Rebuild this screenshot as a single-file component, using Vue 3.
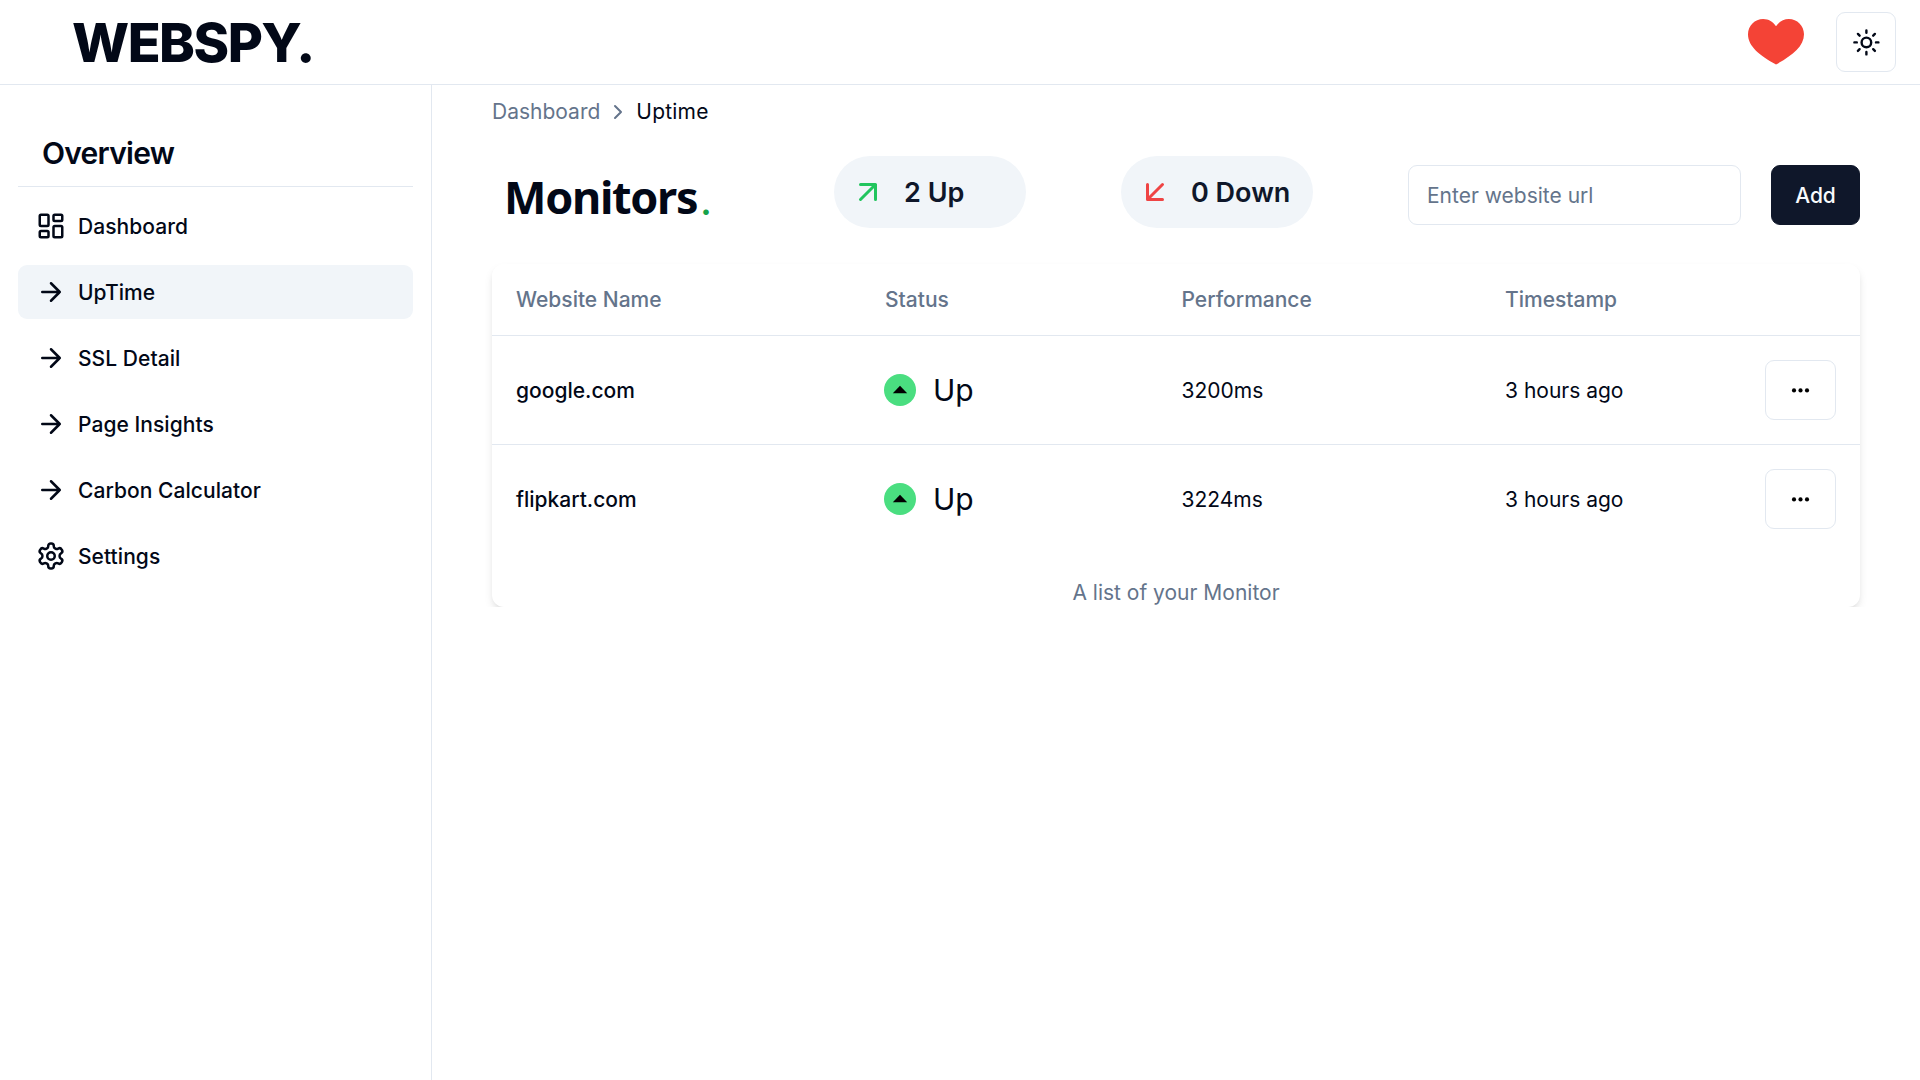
<script setup>
const nav = [
  { label: 'Dashboard', icon: 'dashboard' },
  { label: 'UpTime', icon: 'arrow', active: true },
  { label: 'SSL Detail', icon: 'arrow' },
  { label: 'Page Insights', icon: 'arrow' },
  { label: 'Carbon Calculator', icon: 'arrow' },
  { label: 'Settings', icon: 'settings' },
]
const monitors = [
  { site: 'google.com', status: 'Up', performance: '3200ms', time: '3 hours ago' },
  { site: 'flipkart.com', status: 'Up', performance: '3224ms', time: '3 hours ago' },
]
</script>

<template>
  <div class="app">
    <header class="topbar">
      <div class="logo">WEBSPY.</div>
      <div class="actions">
        <svg class="heart" viewBox="0 0 56 46"><path fill="#f44336" d="M28 7.200C25.200 2.800 20.500 0 15.200 0 6.800 0 0 6.800 0 15.200 0 27.500 12 36.500 28 45.500 44 36.500 56 27.500 56 15.200 56 6.800 49.200 0 40.800 0 35.500 0 30.800 2.800 28 7.200Z" /></svg>
        <button class="theme">
          <svg class="line" width="28.8" height="28.8" viewBox="0 0 24 24"><circle cx="12" cy="12" r="4" /><path d="M12 2v2M12 20v2M4.930 4.930l1.410 1.410M17.660 17.660l1.410 1.410M2 12h2M20 12h2M6.340 17.660l-1.410 1.410M19.070 4.930l-1.410 1.410" /></svg>
        </button>
      </div>
    </header>

    <div class="body">
      <aside class="sidebar">
        <h2>Overview</h2>
        <nav>
          <a v-for="item in nav" :key="item.label" class="item" :class="{ active: item.active }">
            <svg class="line" width="30" height="30" viewBox="0 0 24 24">
              <template v-if="item.icon === 'dashboard'">
                <rect width="7" height="9" x="3" y="3" rx="1" /><rect width="7" height="5" x="14" y="3" rx="1" />
                <rect width="7" height="9" x="14" y="12" rx="1" /><rect width="7" height="5" x="3" y="16" rx="1" />
              </template>
              <path v-else-if="item.icon === 'arrow'" d="M5 12h14M12 5l7 7-7 7" />
              <template v-else>
                <path d="M12.220 2h-.44a2 2 0 0 0-2 2v.18a2 2 0 0 1-1 1.730l-.43.25a2 2 0 0 1-2 0l-.15-.08a2 2 0 0 0-2.730.73l-.22.38a2 2 0 0 0 .73 2.730l.15.1a2 2 0 0 1 1 1.720v.51a2 2 0 0 1-1 1.740l-.15.09a2 2 0 0 0-.73 2.730l.22.38a2 2 0 0 0 2.730.73l.15-.08a2 2 0 0 1 2 0l.43.25a2 2 0 0 1 1 1.730V20a2 2 0 0 0 2 2h.44a2 2 0 0 0 2-2v-.18a2 2 0 0 1 1-1.730l.43-.25a2 2 0 0 1 2 0l.15.08a2 2 0 0 0 2.730-.73l.22-.39a2 2 0 0 0-.73-2.730l-.15-.08a2 2 0 0 1-1-1.740v-.5a2 2 0 0 1 1-1.740l.15-.09a2 2 0 0 0 .73-2.730l-.22-.38a2 2 0 0 0-2.730-.73l-.15.08a2 2 0 0 1-2 0l-.43-.25a2 2 0 0 1-1-1.730V4a2 2 0 0 0-2-2z" />
                <circle cx="12" cy="12" r="3" />
              </template>
            </svg>
            <span>{{ item.label }}</span>
          </a>
        </nav>
      </aside>

      <main>
        <div class="crumbs">
          <span>Dashboard</span>
          <svg class="line" width="24" height="24" viewBox="0 0 24 24"><path d="m9 18 6-6-6-6" /></svg>
          <span class="here">Uptime</span>
        </div>

        <div class="toolbar">
          <h1>Monitors<span>.</span></h1>
          <div class="pill up">
            <svg class="line" width="36" height="36" viewBox="0 0 24 24"><path d="M7 7h10v10M7 17 17 7" /></svg>
            <span>2 Up</span>
          </div>
          <div class="pill down">
            <svg class="line" width="36" height="36" viewBox="0 0 24 24"><path d="M17 7 7 17M17 17H7V7" /></svg>
            <span>0 Down</span>
          </div>
          <input type="text" placeholder="Enter website url" />
          <button class="add">Add</button>
        </div>

        <div class="clip">
          <section class="card">
            <div class="row head">
              <span>Website Name</span><span>Status</span><span>Performance</span><span>Timestamp</span><span></span>
            </div>
            <div v-for="m in monitors" :key="m.site" class="row">
              <span class="cell site">{{ m.site }}</span>
              <span class="status">
                <svg width="32" height="32" viewBox="0 0 32 32"><circle cx="16" cy="16" r="16" fill="#4ade80" /><path d="M8.800 19.200 16 11.800l7.200 7.400z" /></svg>
                {{ m.status }}
              </span>
              <span class="cell">{{ m.performance }}</span>
              <span class="cell">{{ m.time }}</span>
              <span>
                <button class="more">
                  <svg width="24" height="24" viewBox="0 0 24 24"><circle cx="5" cy="12.400" r="2.100" /><circle cx="11.500" cy="12.400" r="2.100" /><circle cx="18" cy="12.400" r="2.100" /></svg>
                </button>
              </span>
            </div>
            <p class="caption">A list of your Monitor</p>
          </section>
        </div>
      </main>
    </div>
  </div>
</template>

<style>
body { margin: 0; background: #fff; }
</style>

<style scoped>
* { box-sizing: border-box; }
.app {
  height: 1080px;
  display: flex;
  flex-direction: column;
  overflow: hidden;
  font: 400 21px/30px Inter, "Liberation Sans", sans-serif;
  color: #020817;
  background: #fff;
}
button { font: inherit; color: inherit; padding: 0; display: flex; align-items: center; justify-content: center; background: #fff; border: 1px solid #e2e8f0; border-radius: 9px; }
svg { flex: none; display: block; }
.line { fill: none; stroke: currentColor; stroke-width: 2; stroke-linecap: round; stroke-linejoin: round; }
.topbar { height: 85px; flex: none; display: flex; align-items: center; justify-content: space-between; padding: 0 24px 1px 72px; border-bottom: 1px solid #e2e8f0; }
.logo { padding-top: 2px; font-size: 54px; line-height: 60px; font-weight: 800; letter-spacing: -1.5px; }
.actions { display: flex; align-items: center; gap: 32px; }
.heart { width: 56px; height: 46px; }
.theme { width: 60px; height: 60px; padding-top: 1px; }
.body { flex: 1; display: flex; min-height: 0; }
.sidebar { width: 432px; flex: none; border-right: 1px solid #e2e8f0; padding: 48px 18px 0; }
h2 { margin: 0 0 12px; height: 54px; padding: 0 24px; border-bottom: 1px solid #e2e8f0; font-size: 30px; line-height: 40px; font-weight: 600; letter-spacing: -0.75px; }
nav { display: flex; flex-direction: column; gap: 12px; }
.item { height: 54px; padding: 0 18px; display: flex; align-items: center; gap: 12px; border-radius: 9px; font-weight: 500; letter-spacing: 0.05px; }
.item span { padding-top: 2px; }
.active { background: #f1f5f9; }
main { flex: 1; min-width: 0; padding: 12px 60px 0; }
.crumbs { display: flex; align-items: center; gap: 6px; height: 30px; color: #64748b; }
.here { color: #020817; letter-spacing: 0.2px; }
.toolbar { display: flex; align-items: flex-start; height: 108px; margin: 29px 0 0; }
h1 { width: 342px; margin: 14px 0 0; padding-left: 12px; font: 700 45px/54px "Noto Sans", sans-serif; letter-spacing: -1.3px; }
h1 span { position: relative; top: 1px; margin-left: 3px; font: 600 36px/1 Inter, sans-serif; color: #16a34a; }
.pill { width: 192px; height: 72px; border-radius: 36px; padding-left: 16px; display: flex; align-items: center; gap: 18px; background: #f1f5f9; color: #0f172a; font-size: 27px; font-weight: 600; }
.pill span { padding-top: 2px; }
.up svg { color: #22c55e; }
.down svg { color: #ef4444; }
.down { margin: 0 95px; }
input { width: 333px; height: 60px; margin: 9px 30px 0 0; padding: 0 18px; border: 1px solid #e2e8f0; border-radius: 9px; font: inherit; background: #fff; outline: none; }
input::placeholder { color: #64748b; opacity: 1; }
.add { width: 89px; height: 60px; margin-top: 9px; padding-top: 2px; background: #0f172a; border-color: #0f172a; color: #f8fafc; font-weight: 500; }
.clip { clip-path: inset(-20px -40px 0); }
.card { border-radius: 12px; background: #fff; box-shadow: 0 5px 10px -1px rgba(0, 0, 0, .1), 0 3px 6px -3px rgba(0, 0, 0, .1); }
.row { display: grid; grid-template-columns: 369px 296.5px 323.5px 260px 119px; align-items: center; height: 108px; }
.row > span { padding: 0 24px; }
.row > .cell { padding-top: 2px; }
.head { height: 72px; border-bottom: 1px solid #e2e8f0; color: #64748b; font-weight: 500; }
.head + .row { height: 109px; border-bottom: 1px solid #e2e8f0; }
.site { font-weight: 500; }
.row .status { display: flex; align-items: center; gap: 17px; padding-left: 23px; font-size: 30px; }
.more { width: 71px; height: 60px; }
.caption { margin: 0; padding-top: 25px; height: 54px; text-align: center; color: #64748b; line-height: 30px; }
</style>
